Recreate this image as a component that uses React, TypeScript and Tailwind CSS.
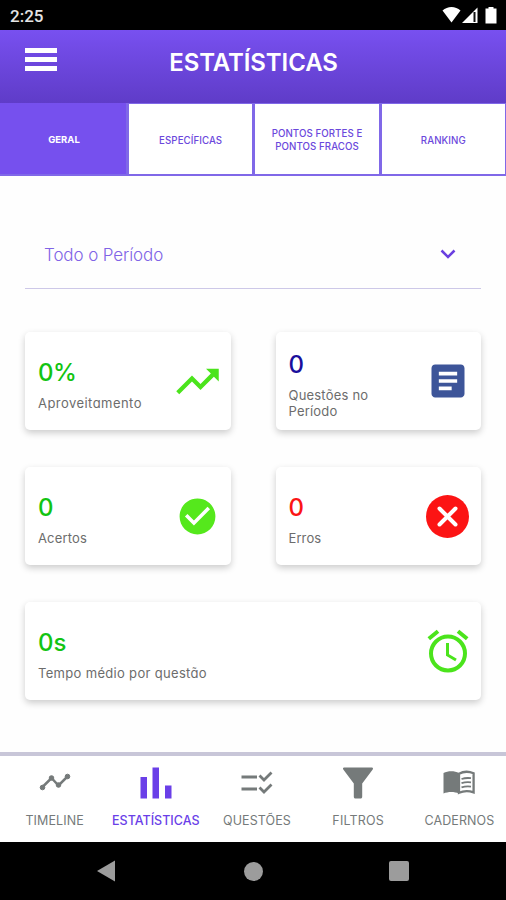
import type { ReactNode } from "react";

const tabs = [
  { lines: ["GERAL"], active: true },
  { lines: ["ESPECÍFICAS"], active: false },
  { lines: ["PONTOS FORTES E", "PONTOS FRACOS"], active: false },
  { lines: ["RANKING"], active: false },
];

function Icon({ d, className }: { d: string; className: string }) {
  return (
    <svg viewBox="0 0 24 24" fill="currentColor" className={className}>
      <path d={d} />
    </svg>
  );
}

function StatCard({
  value,
  label,
  valueClass,
  labelClass,
  icon,
}: {
  value: string;
  label: string;
  valueClass: string;
  labelClass: string;
  icon: ReactNode;
}) {
  return (
    <div className="flex h-[98px] flex-1 items-center rounded-[5px] bg-white pr-2 pl-[13px] shadow-[0_3px_7px_rgba(0,0,0,0.2)]">
      <div className="flex-1 pt-1.5">
        <div className={`text-2xl leading-[30px] font-medium ${valueClass}`}>{value}</div>
        <div className={`mt-[7px] text-[13px] leading-4 text-[#6c6c6c] ${labelClass}`}>{label}</div>
      </div>
      <div className="flex w-[51px] shrink-0 items-center justify-center">{icon}</div>
    </div>
  );
}

function NavItem({
  label,
  active,
  labelClass,
  children,
}: {
  label: string;
  active?: boolean;
  labelClass: string;
  children: ReactNode;
}) {
  return (
    <div className={`flex flex-col items-center pt-2 ${active ? "text-[#6a3fe8]" : "text-[#757a7a]"}`}>
      <div className="flex h-[38px] items-center justify-center">{children}</div>
      <div className={`mt-[11px] text-[12.500px] leading-4 whitespace-nowrap ${labelClass}`}>{label}</div>
    </div>
  );
}

export default function App() {
  return (
    <div className="flex h-[900px] w-[506px] flex-col overflow-hidden bg-[#fefefe] font-['Inter','Noto_Sans',sans-serif] [font-feature-settings:'cv11']">
      <div className="flex h-[30px] shrink-0 items-center bg-black pr-2 pl-2.5">
        <span className="flex-1 pt-[3px] font-[Roboto,sans-serif] text-[17px] font-medium text-[#e4e4e4]">2:25</span>
        <svg viewBox="0 0 56 18" className="h-[18px] w-14" fill="#fff">
          <path d="M0.500 4.500C5.500 -0.300 13.500 -0.300 18.500 4.500L9.500 16.500Z" />
          <path d="M20 17L35.500 1.500V17Z" />
          <path d="M31.500 6V16H33.500V6Z" fill="#111" />
          <path d="M46.500 1H51.500V2.500H54.500V17.500H43.500V2.500H46.500Z" />
        </svg>
      </div>

      <header className="grid h-[73px] shrink-0 grid-cols-[100px_1fr_100px] items-center bg-linear-to-b from-[#7850f0] to-[#5f3cc8] pb-3">
        <div className="ml-[25px] flex w-8 flex-col gap-1 pb-[3px]">
          <span className="h-[5px] bg-white" />
          <span className="h-[5px] bg-white" />
          <span className="h-[5px] bg-white" />
        </div>
        <h1 className="pt-1 pl-px text-center text-2xl leading-8 font-semibold tracking-[-0.1px] whitespace-nowrap text-white">ESTATÍSTICAS</h1>
      </header>

      <div className="flex h-[73px] shrink-0 gap-[3px] border-b-2 border-[#8068e8] bg-[#8068e8] pr-px">
        {tabs.map((tab) => (
          <div
            key={tab.lines[0]}
            className={
              tab.active
                ? "flex w-[126px] shrink-0 flex-col items-center justify-center bg-[#7650ee] pt-0.5 pl-0.5 text-[9.500px] leading-[13px] font-bold text-white"
                : "mt-px flex flex-1 flex-col items-center justify-center bg-white pt-0.5 text-[9.700px] leading-[13px] font-medium tracking-[0.08px] text-[#6b48dc]"
            }
          >
            {tab.lines.map((line) => (
              <span key={line} className="whitespace-nowrap">{line}</span>
            ))}
          </div>
        ))}
      </div>

      <main className="flex flex-1 flex-col px-[25px]">
        <div className="mt-[46px] flex h-[67px] items-center justify-between border-b border-[#cdc8e8] pr-6 pl-[19px]">
          <span className="pt-0.5 text-[17px] font-light tracking-[-0.1px] text-[#8064e6]">Todo o Período</span>
          <svg viewBox="0 0 18 12" className="mb-[3px] h-3 w-[18px]" fill="none" stroke="#6a3fe0" strokeWidth="2.500">
            <path d="M2.500 2.500L9 9L15.500 2.500" />
          </svg>
        </div>

        <div className="mt-[43px] flex flex-col gap-[37px]">
          <div className="flex gap-[45px]">
            <StatCard
              value="0%"
              label="Aproveitamento"
              valueClass="tracking-[-0.4px] text-[#12c412]"
              labelClass="tracking-[0.45px]"
              icon={
                <Icon
                  className="size-[51px] shrink-0 text-[#4be41c]"
                  d="M16 6l2.290 2.290-4.880 4.880-4-4L2 16.590 3.410 18l6-6 4 4 6.300-6.290L22 12V6z"
                />
              }
            />
            <StatCard
              value="0"
              label="Questões no Período"
              valueClass="text-[#1a0f9c]"
              labelClass="w-24 tracking-[0.2px]"
              icon={
                <Icon
                  className="size-11 shrink-0 text-[#3d5599]"
                  d="M19 3H5c-1.100 0-2 .9-2 2v14c0 1.100.9 2 2 2h14c1.100 0 2-.9 2-2V5c0-1.100-.9-2-2-2zm-5 14H7v-2h7v2zm3-4H7v-2h10v2zm0-4H7V7h10v2z"
                />
              }
            />
          </div>
          <div className="flex gap-[45px]">
            <StatCard
              value="0"
              label="Acertos"
              valueClass="text-[#12c412]"
              labelClass="tracking-[0.15px]"
              icon={
                <Icon
                  className="size-[43px] shrink-0 text-[#55e81c]"
                  d="M12 2C6.480 2 2 6.480 2 12s4.480 10 10 10 10-4.480 10-10S17.520 2 12 2zm-2 15l-5-5 1.410-1.410L10 14.170l7.590-7.590L19 8l-9 9z"
                />
              }
            />
            <StatCard
              value="0"
              label="Erros"
              valueClass="text-[#fb1515]"
              labelClass="tracking-[0.1px]"
              icon={
                <svg viewBox="0 0 43 43" className="size-[43px] shrink-0">
                  <circle cx="21.500" cy="21.500" r="21.500" fill="#fc1414" />
                  <path d="M13.500 13.500L29.500 29.500M29.500 13.500L13.500 29.500" stroke="#fff" strokeWidth="4" strokeLinecap="round" />
                </svg>
              }
            />
          </div>
          <div className="flex">
            <StatCard
              value="0s"
              label="Tempo médio por questão"
              valueClass="text-[#12c412]"
              labelClass="tracking-[0.32px]"
              icon={
                <svg viewBox="0 0 42 44" className="h-11 w-[42px] shrink-0" fill="none" stroke="#4be41c">
                  <circle cx="21" cy="24.500" r="17" strokeWidth="4" />
                  <path d="M1.800 9.800L11 2.300M31 2.300L40.200 9.800" strokeWidth="4" />
                  <path d="M20.500 14V26L29 31" strokeWidth="3" />
                </svg>
              }
            />
          </div>
        </div>
      </main>

      <nav className="h-[90px] shrink-0 border-t-4 border-[#c8c6d8] bg-white">
        <div className="ml-1 grid w-[506px] grid-cols-5">
          <NavItem label="TIMELINE" labelClass="tracking-[0.1px]">
            <svg viewBox="0 0 32 18" className="mb-0.5 h-[18px] w-8" fill="currentColor" stroke="currentColor">
              <path d="M3 14.500L12.500 5L19.500 12.500L28.500 3.500" fill="none" strokeWidth="2.500" />
              <circle cx="3.500" cy="14.500" r="2.300" />
              <circle cx="12.500" cy="5" r="2.300" />
              <circle cx="19.500" cy="12" r="2.300" />
              <circle cx="28.500" cy="3.500" r="2.300" />
            </svg>
          </NavItem>
          <NavItem label="ESTATÍSTICAS" active labelClass="font-medium">
            <svg viewBox="0 0 32 32" className="size-8" fill="currentColor">
              <path d="M0.500 10H7V31.500H0.500ZM12.500 0.500H19V31.500H12.500ZM25 18.500H31.500V31.500H25Z" />
            </svg>
          </NavItem>
          <NavItem label="QUESTÕES" labelClass="tracking-[0.1px]">
            <svg viewBox="0 0 32 24" className="mb-0.5 h-6 w-8" fill="none" stroke="currentColor" strokeWidth="2.800">
              <path d="M0.500 7H16M0.500 19H16M18.500 5.500L23 10L30.500 2.500M18.500 17.500L23 22L30.500 14.500" />
            </svg>
          </NavItem>
          <NavItem label="FILTROS" labelClass="tracking-[0.2px]">
            <svg viewBox="0 0 32 32" className="size-8" fill="currentColor">
              <path d="M2 0.500H30C31 0.500 31.300 1.700 30.700 2.500L20.200 16.500V29.500C20.200 31 19.500 31.500 18.500 31.500H13.500C12.500 31.500 11.800 31 11.800 29.500V16.500L1.300 2.500C0.700 1.700 1 0.500 2 0.500Z" />
            </svg>
          </NavItem>
          <NavItem label="CADERNOS" labelClass="tracking-[0.1px]">
            <svg viewBox="0 0 32 25" className="mb-0.5 h-[25px] w-8" fill="none" stroke="currentColor">
              <path d="M16 3C11.500 0.500 5 0.500 0.500 3V23.500C5 21.500 11.500 21.500 16 23.500Z" fill="currentColor" stroke="none" />
              <path d="M16 3.700C20.500 1.300 26 1.300 30.600 3.300V22.300C26 20.700 20.500 20.700 16 22.800Z" strokeWidth="2.300" />
              <path d="M18.500 9C21.500 8 25 7.800 28 8.200M18.500 13.200C21.500 12.200 25 12 28 12.400M18.500 17.400C21.500 16.400 25 16.200 28 16.600" strokeWidth="1.800" />
            </svg>
          </NavItem>
        </div>
      </nav>

      <div className="flex h-[58px] shrink-0 items-center bg-black pl-24">
        <svg viewBox="0 0 20 22" className="h-[22px] w-5" fill="#9c9c9c">
          <path d="M1 11L19 0.500V21.500Z" />
        </svg>
        <span className="ml-[128px] size-[19px] rounded-full bg-[#9c9c9c]" />
        <span className="ml-[126px] size-5 rounded-xs bg-[#9c9c9c]" />
      </div>
    </div>
  );
}
